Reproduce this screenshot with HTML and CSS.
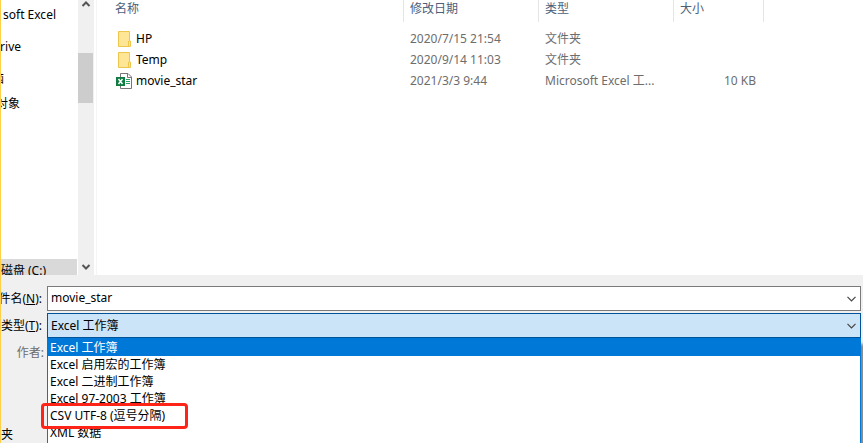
FILE: index.html
```
<!DOCTYPE html>
<html lang="zh-CN">
<head>
<meta charset="utf-8">
<title>另存为</title>
<link rel="stylesheet" href="styles.css">
</head>
<body>
<main class="dialog">
  <section class="explorer">
    <nav class="tree">
      <a class="node office" href="#">soft Excel</a>
      <a class="node drive" href="#">rive</a>
      <a class="node computer" href="#">脑</a>
      <a class="node objects" href="#">对象</a>
      <a class="node disk" href="#">磁盘 (C:)</a>
    </nav>
    <div class="scrollbar">
      <svg width="10" height="8" viewBox="0 0 10 8"><path d="M1.5 6L5 2.5L8.5 6" fill="none" stroke="#555" stroke-width="2"/></svg>
      <div class="thumb"></div>
      <svg width="10" height="8" viewBox="0 0 10 8"><path d="M1.5 2L5 5.5L8.5 2" fill="none" stroke="#555" stroke-width="2"/></svg>
    </div>
    <div class="files">
      <table>
        <colgroup><col class="c-name"><col class="c-date"><col class="c-type"><col class="c-size"><col></colgroup>
        <thead><tr><th>名称</th><th>修改日期</th><th>类型</th><th>大小</th><td></td></tr></thead>
        <tbody>
          <tr><td class="name"><div class="entry"><svg width="16" height="16" viewBox="0 0 16 16"><path d="M2.5.5h11v9.500h1v5.500h-12z" fill="#ffe596" stroke="#edc64e"/><path d="M12.5 10v5" stroke="#edc64e"/></svg>HP</div></td><td>2020/7/15 21:54</td><td>文件夹</td><td></td><td></td></tr>
          <tr><td class="name"><div class="entry"><svg width="16" height="16" viewBox="0 0 16 16"><path d="M2.5.5h11v9.500h1v5.500h-12z" fill="#ffe596" stroke="#edc64e"/><path d="M12.5 10v5" stroke="#edc64e"/></svg>Temp</div></td><td>2020/9/14 11:03</td><td>文件夹</td><td></td><td></td></tr>
          <tr><td class="name"><div class="entry"><svg width="16" height="16" viewBox="0 0 16 16"><path d="M4.5.5H12l3.500 3.500v11.500h-11z" fill="#fff" stroke="#777"/><path d="M11.500.5v4h4" fill="none" stroke="#777"/><path d="M10 6.500h4M10 8.500h4M10 10.500h4" stroke="#21a366"/><path d="M0 4h9v9H0z" fill="#107c41"/><path d="M2.500 6l4 5M6.500 6l-4 5" stroke="#fff" stroke-width="1.500"/></svg>movie_star</div></td><td>2021/3/3 9:44</td><td>Microsoft Excel 工...</td><td class="size">10 KB</td><td></td></tr>
        </tbody>
      </table>
    </div>
  </section>
  <form class="fields">
    <label for="filename">件名(<u>N</u>):</label>
    <div class="control">
      <input id="filename" type="text" value="movie_star">
      <svg class="arrow" width="9" height="6" viewBox="0 0 9 6"><path d="M.5 .8L4.500 4.800L8.500 .8" fill="none" stroke="#444" stroke-width="1.200"/></svg>
    </div>
    <label for="filetype">类型(<u>T</u>):</label>
    <div class="control">
      <select id="filetype"><option>Excel 工作簿</option></select>
      <svg class="arrow" width="9" height="6" viewBox="0 0 9 6"><path d="M.5 .8L4.500 4.800L8.500 .8" fill="none" stroke="#444" stroke-width="1.200"/></svg>
      <ul class="menu" role="listbox" aria-label="保存类型">
        <li role="option" class="selected" aria-selected="true">Excel 工作簿</li>
        <li role="option">Excel 启用宏的工作簿</li>
        <li role="option">Excel 二进制工作簿</li>
        <li role="option">Excel 97-2003 工作簿</li>
        <li role="option" class="marked">CSV UTF-8 (逗号分隔)</li>
        <li role="option">XML 数据</li>
      </ul>
    </div>
    <span class="author">作者:</span>
  </form>
  <footer class="hide">夹</footer>
</main>
</body>
</html>
```
FILE: styles.css
```
*, *::after { box-sizing: border-box; }
body {
  margin: 0;
  font: 12px/17px "Noto Sans", "Noto Sans CJK SC", sans-serif;
  color: #000;
  background: #f0f0f0;
}
.dialog {
  height: 100vh;
  display: flex;
  flex-direction: column;
  overflow: hidden;
  position: relative;
  border-left: 1px solid #ffcf4a;
}
.explorer {
  display: flex;
  height: 275px;
  flex: none;
  background: #fff;
}
.tree {
  width: 77px;
  display: flex;
  flex-direction: column;
  overflow: hidden;
  padding-top: 6px;
}
.node {
  display: flex;
  justify-content: flex-end;
  flex: none;
  overflow: hidden;
  white-space: nowrap;
  color: #000;
  text-decoration: none;
}
.office { width: 55px; margin-bottom: 15px; }
.drive { width: 20px; margin-bottom: 15px; }
.computer { width: 3px; margin-bottom: 8px; }
.objects { width: 19px; }
.disk {
  width: 76px;
  height: 16px;
  margin-top: auto;
  padding: 3px 31px 0 0;
  background: #d9d9d9;
}
.scrollbar {
  width: 16px;
  display: flex;
  flex-direction: column;
  align-items: center;
  justify-content: space-between;
  padding-bottom: 4px;
  background: #f0f0f0;
}
.thumb {
  width: 100%;
  height: 50px;
  margin: 45px 0 auto;
  background: #cdcdcd;
  border-right: 1px solid #f0f0f0;
}
.files {
  flex: 1;
  margin-left: 2px;
  padding-left: 10px;
  border-left: 1px solid #f5f5f5;
}
table {
  width: 100%;
  table-layout: fixed;
  border-collapse: separate;
  border-spacing: 0;
}
.c-name { width: 297px; }
.c-date, .c-type { width: 135px; }
.c-size { width: 90px; }
th {
  height: 22px;
  padding: 0 0 5px 6px;
  text-align: left;
  font-weight: 400;
  color: #4c607a;
  border-right: 1px solid #e5e5e5;
}
th:first-child { padding-left: 8px; }
tbody::before { content: ""; display: block; height: 6px; }
tbody td {
  height: 21px;
  padding: 0 0 0 6px;
  color: #6d6d6d;
  white-space: nowrap;
}
tbody .name { padding-left: 9px; color: #000; }
.entry { display: flex; align-items: center; gap: 4px; }
tbody .size { padding-right: 8px; text-align: right; }
.fields {
  display: grid;
  grid-template-columns: 44px 1fr;
  column-gap: 2px;
  row-gap: 2px;
  align-items: center;
  padding: 11px 2px 0 0;
}
label, .author {
  display: flex;
  justify-content: flex-end;
  padding-right: 3px;
  white-space: nowrap;
}
label { overflow: hidden; }
.author { padding: 4px 1px 0 0; color: #6d6d6d; }
.control { position: relative; }
input, select {
  display: block;
  width: 100%;
  height: 25px;
  margin: 0;
  padding: 0 20px 2px 3px;
  font: inherit;
  color: #000;
  background: #fff;
  border: 1px solid #7a7a7a;
  border-radius: 0;
  outline: 0;
  appearance: none;
}
select {
  padding-bottom: 0;
  background: #cce4f7;
  border-color: #005499;
}
.arrow { position: absolute; top: 10px; right: 5px; pointer-events: none; }
.menu {
  position: absolute;
  top: 25px;
  left: 0;
  right: 0;
  height: 120px;
  margin: 0;
  padding: 0;
  list-style: none;
  background: #fff;
  border: 1px solid #0078d7;
  box-shadow: 4px 6px 3px #888;
}
.menu li { position: relative; height: 17px; padding-left: 2px; }
.menu .selected { color: #fff; background: #0078d7; }
.marked::after {
  content: "";
  position: absolute;
  top: -4px;
  left: -7px;
  width: 147px;
  height: 26px;
  border: 3px solid #ff2418;
  border-radius: 4px;
  z-index: 1;
}
.hide { margin-top: auto; }
```
